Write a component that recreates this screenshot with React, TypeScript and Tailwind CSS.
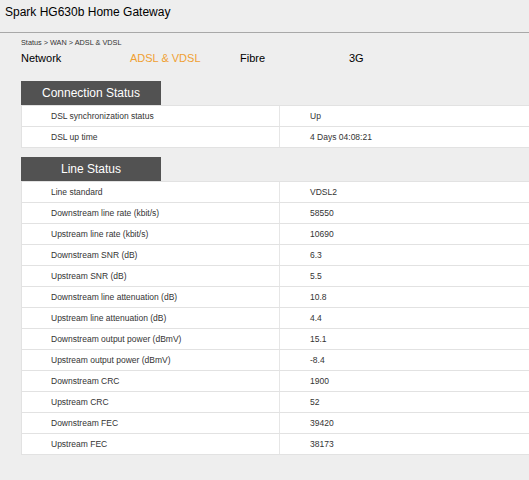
import React from "react";

const conn: [string, string][] = [
  ["DSL synchronization status", "Up"],
  ["DSL up time", "4 Days 04:08:21"],
];

const line: [string, string][] = [
  ["Line standard", "VDSL2"],
  ["Downstream line rate (kbit/s)", "58550"],
  ["Upstream line rate (kbit/s)", "10690"],
  ["Downstream SNR (dB)", "6.3"],
  ["Upstream SNR (dB)", "5.5"],
  ["Downstream line attenuation (dB)", "10.8"],
  ["Upstream line attenuation (dB)", "4.4"],
  ["Downstream output power (dBmV)", "15.1"],
  ["Upstream output power (dBmV)", "-8.4"],
  ["Downstream CRC", "1900"],
  ["Upstream CRC", "52"],
  ["Downstream FEC", "39420"],
  ["Upstream FEC", "38173"],
];

function Section({ title, rows }: { title: string; rows: [string, string][] }) {
  return (
    <div className="flex flex-col">
      <div className="w-[140px] h-[24px] bg-[#525252] text-white text-[12px] flex items-center justify-center">
        {title}
      </div>
      <div className="bg-white border-l border-[#e2e2e2] flex flex-col">
        {rows.map(([k, v], i) => (
          <div key={i} className="flex h-[21px] border-t border-[#e2e2e2] text-[8.5px] text-[#333]">
            <div className="w-[258px] pl-[29px] flex items-center border-r border-[#e6e6e6]">{k}</div>
            <div className="flex-1 pl-[30px] flex items-center">{v}</div>
          </div>
        ))}
        <div className="border-t border-[#e2e2e2]" />
      </div>
    </div>
  );
}

export default function App() {
  return (
    <div
      className="w-[529px] h-[480px] bg-[#eeeeee] overflow-hidden text-[#111]"
      style={{ fontFamily: '"Liberation Sans", Arial, sans-serif' }}
    >
      <div className="h-[33px] border-b border-[#a8a8a8] pl-[5px] pt-[4px] text-[12px] leading-[16px] text-black">
        Spark HG630b Home Gateway
      </div>
      <div className="pl-[21px] pt-[5px]">
        <div className="text-[7.3px] leading-[10px] text-[#333]">Status &gt; WAN &gt; ADSL &amp; VDSL</div>
        <div className="flex text-[11px] leading-[14px] mt-[3px] text-black">
          <div className="w-[109px]">Network</div>
          <div className="w-[110px] text-[#f0a032]">ADSL &amp; VDSL</div>
          <div className="w-[109px]">Fibre</div>
          <div>3G</div>
        </div>
        <div className="mt-[16px] flex flex-col gap-[9px]">
          <Section title="Connection Status" rows={conn} />
          <Section title="Line Status" rows={line} />
        </div>
      </div>
    </div>
  );
}
